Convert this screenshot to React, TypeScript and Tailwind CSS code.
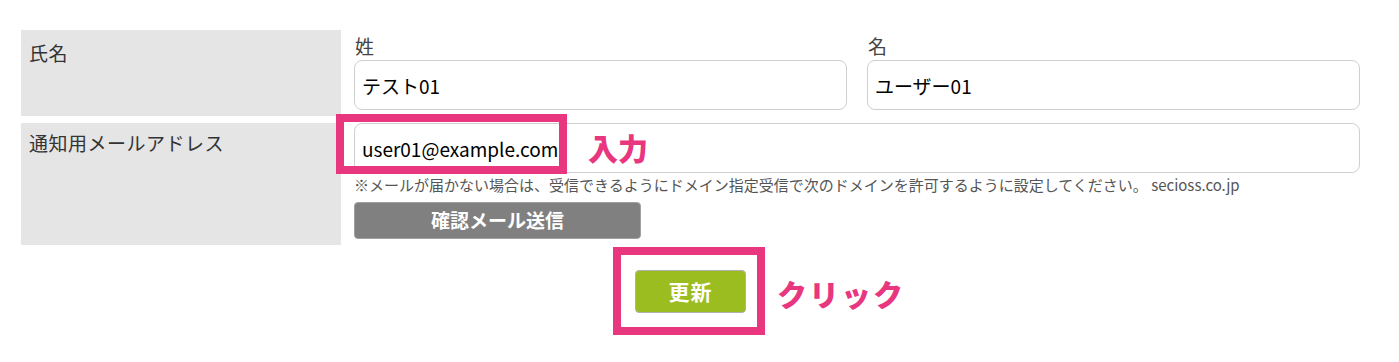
import React from "react";

const font = { fontFamily: '"Noto Sans CJK JP", "Noto Sans", sans-serif' };

const TextBox: React.FC<{ value: string; className?: string }> = ({ value, className = "" }) => (
	<input
		readOnly
		defaultValue={value}
		className={`h-[50px] rounded-[8px] border border-[#cfcfcf] bg-white pl-[7px] text-[19px] text-black outline-none ${className}`}
		style={font}
	/>
);

const App: React.FC = () => {
	return (
		<div className="w-[1399px] h-[362px] bg-white pl-[21px] pr-[39px] pt-[30px]" style={font}>
			{/* 氏名 */}
			<div className="flex">
				<div className="w-[320px] shrink-0 bg-[#e5e5e5] pl-[8px] pt-[9px] text-[19px] leading-[28px] tracking-[0.5px] text-[#333]">
					氏名
				</div>
				<div className="flex flex-1 gap-[20px] pl-[13px] pt-[2px] pb-[6px]">
					<div className="flex flex-1 flex-col">
						<span className="pl-[1px] text-[19px] leading-[28px] text-[#444]">姓</span>
						<TextBox value="テスト01" className="w-full" />
					</div>
					<div className="flex flex-1 flex-col">
						<span className="pl-[1px] text-[19px] leading-[28px] text-[#444]">名</span>
						<TextBox value="ユーザー01" className="w-full" />
					</div>
				</div>
			</div>

			{/* 通知用メールアドレス */}
			<div className="mt-[7px] flex">
				<div className="w-[320px] shrink-0 bg-[#e5e5e5] pl-[8px] pt-[6px] text-[19px] leading-[28px] tracking-[0.5px] text-[#333]">
					通知用メールアドレス
				</div>
				<div className="relative flex flex-1 flex-col items-start pl-[13px] pb-[6px]">
					<TextBox value="user01@example.com" className="w-full" />
					<div className="absolute left-[-5px] top-[-9px] h-[60px] w-[231px] border-[8px] border-[#e8367f]" />
					<span className="absolute left-[247px] top-[9px] text-[30px] font-black leading-none text-[#e8367f]">
						入力
					</span>
					<p className="mt-[2px] text-[15px] leading-[20px] text-[#555]">
						※メールが届かない場合は、受信できるようにドメイン指定受信で次のドメインを許可するように設定してください。 secioss.co.jp
					</p>
					<button className="mt-[7px] h-[37px] w-[287px] rounded-[4px] border border-[#a0a0a0] bg-[#808080] text-[19px] font-bold text-white">
						確認メール送信
					</button>
				</div>
			</div>

			{/* 更新 */}
			<div className="mt-[25px] flex justify-center">
				<div className="relative">
					<div className="absolute left-[-22px] top-[-23px] h-[88px] w-[152px] border-[8px] border-[#e8367f]" />
					<button className="relative h-[43px] w-[111px] rounded-[4px] border border-[#b0b0b0] bg-[#9cbd1f] text-[21px] font-bold tracking-[1px] text-white">
						更新
					</button>
					<span className="absolute left-[142px] top-[8px] whitespace-nowrap text-[30px] font-black leading-none tracking-[2px] text-[#e8367f]">
						クリック
					</span>
				</div>
			</div>
		</div>
	);
};

export default App;
